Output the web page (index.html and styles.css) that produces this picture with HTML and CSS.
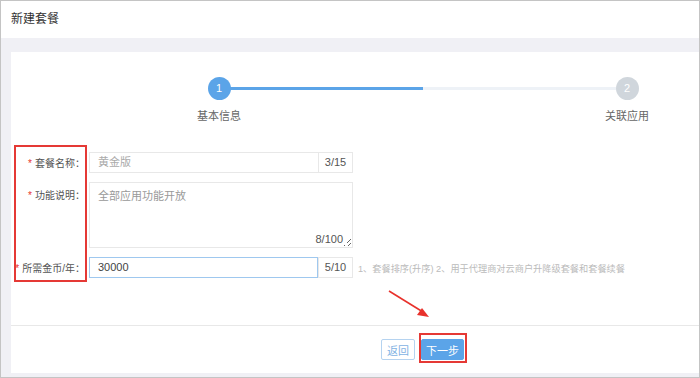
FILE: index.html
```html
<!DOCTYPE html>
<html lang="zh-CN">
<head>
    <meta charset="UTF-8">
    <meta name="viewport" content="width=device-width, initial-scale=1.0">
    <title>新建套餐</title>
    <link rel="stylesheet" href="styles.css">
</head>
<body>

<div class="page">
    <div class="page-header">新建套餐</div>
    <div class="page-body">
        <div class="card">
            <div class="steps">
                <div class="step">
                    <div class="step-dot active">1</div>
                    <div class="step-label">基本信息</div>
                </div>
                <div class="step-line"></div>
                <div class="step">
                    <div class="step-dot">2</div>
                    <div class="step-label">关联应用</div>
                </div>
            </div>

            <div class="form">
                <div class="form-row">
                    <label class="form-label"><span class="req">*</span>套餐名称：</label>
                    <div class="input-group">
                        <div class="input">黄金版</div>
                        <div class="addon">3/15</div>
                    </div>
                </div>
                <div class="form-row top">
                    <label class="form-label"><span class="req">*</span>功能说明：</label>
                    <div class="textarea-wrap">
                        <textarea class="textarea">全部应用功能开放</textarea>
                        <span class="textarea-count">8/100</span>
                    </div>
                </div>
                <div class="form-row">
                    <label class="form-label"><span class="req">*</span>所需金币/年：</label>
                    <div class="input-group">
                        <div class="input focused">30000</div>
                        <div class="addon">5/10</div>
                    </div>
                    <div class="hint">1、套餐排序(升序) 2、用于代理商对云商户升降级套餐和套餐续餐</div>
                </div>
            </div>

            <div class="card-footer">
                <button class="btn btn-default">返回</button>
                <button class="btn btn-primary">下一步</button>
            </div>

            <!-- annotation marks -->
            <div class="mark mark-labels"></div>
            <div class="mark mark-next"></div>
            <svg class="arrow" width="50" height="32" viewBox="0 0 50 32">
                <path d="M2 2 L36 23" stroke="#e8322c" stroke-width="1.6" fill="none"/>
                <polygon points="42,28 30,26 35,19" fill="#e8322c"/>
            </svg>
        </div>
    </div>
</div>

</body>
</html>
```

FILE: styles.css
```css
* {
    box-sizing: border-box;
}
body {
    margin: 0;
    font-family: "Liberation Sans", "Noto Sans CJK SC", sans-serif;
    color: #555;
}
.page {
    width: 700px;
    height: 378px;
    border: 1px solid #c4c4c4;
    display: flex;
    flex-direction: column;
    background-color: #f0f0f5;
}
.page-header {
    height: 37px;
    line-height: 36px;
    padding-left: 10px;
    font-size: 12px;
    color: #333;
    background-color: #fff;
}
.page-body {
    flex: 1;
    display: flex;
    padding: 14px 0 4px 10px;
}
.card {
    flex: 1;
    background-color: #fff;
    display: flex;
    flex-direction: column;
    position: relative;
}

/* steps */
.steps {
    display: flex;
    margin: 25px 48px 0 184px;
}
.step {
    width: 48px;
    display: flex;
    flex-direction: column;
    align-items: center;
}
.step-dot {
    width: 23px;
    height: 23px;
    border-radius: 50%;
    background-color: #d0d6dc;
    color: #fff;
    font-size: 11px;
    line-height: 23px;
    text-align: center;
    position: relative;
    z-index: 1;
}
.step-dot.active {
    background-color: #5ba4e8;
}
.step-label {
    margin-top: 7px;
    font-size: 11px;
    color: #666;
    white-space: nowrap;
}
.step-line {
    flex: 1;
    height: 3px;
    margin: 10px -13px 0;
    background: linear-gradient(to right, #5ba4e8 50%, #eef2f7 50%);
}

/* form */
.form {
    margin-top: 29px;
    display: flex;
    flex-direction: column;
    gap: 9px;
}
.form-row {
    display: flex;
    align-items: center;
}
.form-row.top {
    align-items: flex-start;
}
.form-label {
    width: 78px;
    padding-right: 4px;
    text-align: right;
    font-size: 10px;
    color: #555;
    white-space: nowrap;
}
.form-row.top .form-label {
    padding-top: 5px;
}
.req {
    color: #e8322c;
    margin-right: 3px;
}
.input-group {
    width: 264px;
    height: 21px;
    display: flex;
    font-size: 11px;
}
.input {
    flex: 1;
    border: 1px solid #e8e8e8;
    border-right: none;
    padding-left: 8px;
    line-height: 19px;
    color: #aaa;
}
.input.focused {
    border: 1px solid #9fc8ef;
    color: #444;
}
.addon {
    width: 35px;
    border: 1px solid #e8e8e8;
    text-align: center;
    line-height: 19px;
    color: #555;
}
.hint {
    margin-left: 5px;
    font-size: 9.2px;
    color: #bbb;
    white-space: nowrap;
}
.textarea-wrap {
    position: relative;
    width: 264px;
    height: 66px;
}
.textarea {
    width: 100%;
    height: 100%;
    border: 1px solid #e8e8e8;
    padding: 4px 8px;
    font-family: "Liberation Sans", "Noto Sans CJK SC", sans-serif;
    font-size: 11px;
    color: #999;
    resize: both;
    outline: none;
}
.textarea-count {
    position: absolute;
    right: 6px;
    bottom: 3px;
    padding-right: 4px;
    font-size: 11px;
    color: #555;
    background-color: #fff;
}

/* footer */
.card-footer {
    margin-top: auto;
    height: 48px;
    border-top: 1px solid #e8e8e8;
    display: flex;
    align-items: center;
    gap: 6px;
    padding-left: 370px;
}
.btn {
    height: 21px;
    padding: 0;
    font-family: "Liberation Sans", "Noto Sans CJK SC", sans-serif;
    font-size: 11px;
    border-radius: 2px;
    cursor: pointer;
}
.btn-default {
    width: 34px;
    background-color: #fff;
    border: 1px solid #b5d3f0;
    color: #7fb2e3;
}
.btn-primary {
    width: 43px;
    background-color: #5ba4e8;
    border: 1px solid #5ba4e8;
    color: #fff;
}

/* annotations */
.mark {
    position: absolute;
    border: 2px solid #e53935;
}
.mark-labels {
    left: 3px;
    top: 93px;
    width: 73px;
    height: 137px;
}
.mark-next {
    left: 408px;
    top: 281px;
    width: 48px;
    height: 30px;
}
.arrow {
    position: absolute;
    left: 376px;
    top: 237px;
}
```
